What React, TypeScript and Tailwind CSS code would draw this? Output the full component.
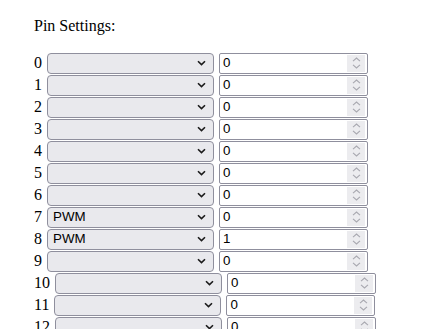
import React from "react";

const values: { mode: string; val: string }[] = [
  { mode: "", val: "0" },
  { mode: "", val: "0" },
  { mode: "", val: "0" },
  { mode: "", val: "0" },
  { mode: "", val: "0" },
  { mode: "", val: "0" },
  { mode: "", val: "0" },
  { mode: "PWM", val: "0" },
  { mode: "PWM", val: "1" },
  { mode: "", val: "0" },
  { mode: "", val: "0" },
  { mode: "", val: "0" },
  { mode: "", val: "0" },
  { mode: "", val: "0" },
];

function Chevron() {
  return (
    <svg width="9" height="6" viewBox="0 0 9 6" className="absolute right-[7px] top-1/2 -translate-y-1/2">
      <path d="M1 1.2 L4.5 4.6 L8 1.2" fill="none" stroke="#1b1b1b" strokeWidth="1.6" />
    </svg>
  );
}

function Spinner() {
  return (
    <div className="absolute right-[2px] top-[1px] bottom-[1px] w-[18px] bg-[#ececef] flex flex-col items-center justify-center gap-[2px]">
      <svg width="9" height="5" viewBox="0 0 9 5">
        <path d="M1 4.2 L4.5 1 L8 4.2" fill="none" stroke="#a8a8b0" strokeWidth="1.1" />
      </svg>
      <svg width="9" height="5" viewBox="0 0 9 5">
        <path d="M1 0.8 L4.5 4 L8 0.8" fill="none" stroke="#a8a8b0" strokeWidth="1.1" />
      </svg>
    </div>
  );
}

export default function App() {
  return (
    <div className="h-[329px] overflow-hidden bg-white text-black font-['Liberation_Serif',serif] text-[16px]">
      <div className="pl-[34px] pt-[17px]">
        <p className="leading-[18px]">Pin Settings:</p>
        <div className="mt-[17px] flex flex-col">
          {values.map((r, i) => (
            <div key={i} className="flex items-center h-[22px]">
              <span className="leading-[18px]">{i}</span>
              <div className="relative ml-[5px] w-[167px] h-[21px] border border-[#8f8f9d] rounded-[4px] bg-[#e9e9ed] flex items-center pl-[5px] font-['Liberation_Sans',Arial,sans-serif] text-[13.333px]">
                {r.mode}
                <Chevron />
              </div>
              <div className="relative ml-[5px] w-[149px] h-[21px] border border-[#8f8f9d] rounded-[2px] bg-white flex items-center pl-[3px] font-['Liberation_Sans',Arial,sans-serif] text-[13.333px]">
                {r.val}
                <Spinner />
              </div>
            </div>
          ))}
        </div>
      </div>
    </div>
  );
}
